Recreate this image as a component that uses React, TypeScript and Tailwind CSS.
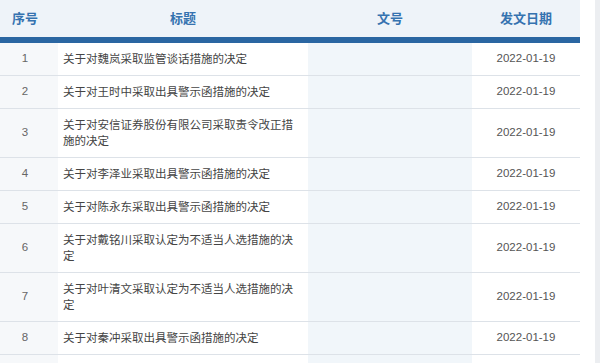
import React from 'react';

interface Notice {
    id: number;
    title: string;
    docNo: string;
    date: string;
}

const notices: Notice[] = [
    { id: 1, title: '关于对魏岚采取监管谈话措施的决定', docNo: '', date: '2022-01-19' },
    { id: 2, title: '关于对王时中采取出具警示函措施的决定', docNo: '', date: '2022-01-19' },
    { id: 3, title: '关于对安信证券股份有限公司采取责令改正措施的决定', docNo: '', date: '2022-01-19' },
    { id: 4, title: '关于对李泽业采取出具警示函措施的决定', docNo: '', date: '2022-01-19' },
    { id: 5, title: '关于对陈永东采取出具警示函措施的决定', docNo: '', date: '2022-01-19' },
    { id: 6, title: '关于对戴铭川采取认定为不适当人选措施的决定', docNo: '', date: '2022-01-19' },
    { id: 7, title: '关于对叶清文采取认定为不适当人选措施的决定', docNo: '', date: '2022-01-19' },
    { id: 8, title: '关于对秦冲采取出具警示函措施的决定', docNo: '', date: '2022-01-19' },
];

const fontStack = "font-['Liberation_Sans','Noto_Sans_CJK_SC',sans-serif]";

const App: React.FC = () => {
    return (
        <div className={`flex w-[600px] h-[363px] overflow-hidden bg-white ${fontStack}`}>
            <table className="table-fixed w-[580px] border-collapse shrink-0 self-start">
                <colgroup>
                    <col className="w-[58px]" />
                    <col className="w-[250px]" />
                    <col className="w-[164px]" />
                    <col className="w-[108px]" />
                </colgroup>
                <thead>
                    <tr className="bg-[#eef3f9] border-b-[6px] border-[#2a66a2] h-[40px]">
                        <th className="pr-[8px] text-center text-[13px] font-bold text-[#3572b0]">序号</th>
                        <th className="text-center text-[13px] font-bold text-[#3572b0]">标题</th>
                        <th className="text-center text-[13px] font-bold text-[#3572b0]">文号</th>
                        <th className="text-center text-[13px] font-bold text-[#3572b0]">发文日期</th>
                    </tr>
                </thead>
                <tbody>
                    {notices.map((n) => (
                        <tr key={n.id} className="border-b border-[#dde2e8]">
                            <td className="bg-[#f6f8fa] pr-[8px] text-center text-[11.5px] text-[#666]">{n.id}</td>
                            <td className="pl-[5px] pr-[10px] py-[8px] text-left text-[11.5px] leading-[16px] text-[#444]">
                                {n.title}
                            </td>
                            <td className="bg-[#f1f6fa] text-center text-[11.5px] text-[#555]">{n.docNo}</td>
                            <td className="text-center text-[11.5px] text-[#555]">{n.date}</td>
                        </tr>
                    ))}
                    <tr className="border-b border-[#dde2e8]">
                        <td className="bg-[#f6f8fa] h-[33px]"></td>
                        <td></td>
                        <td className="bg-[#f1f6fa]"></td>
                        <td></td>
                    </tr>
                </tbody>
            </table>
            <div className="w-[15px] shrink-0" />
            <div className="flex-1 bg-[#eceef1]" />
        </div>
    );
};

export default App;
